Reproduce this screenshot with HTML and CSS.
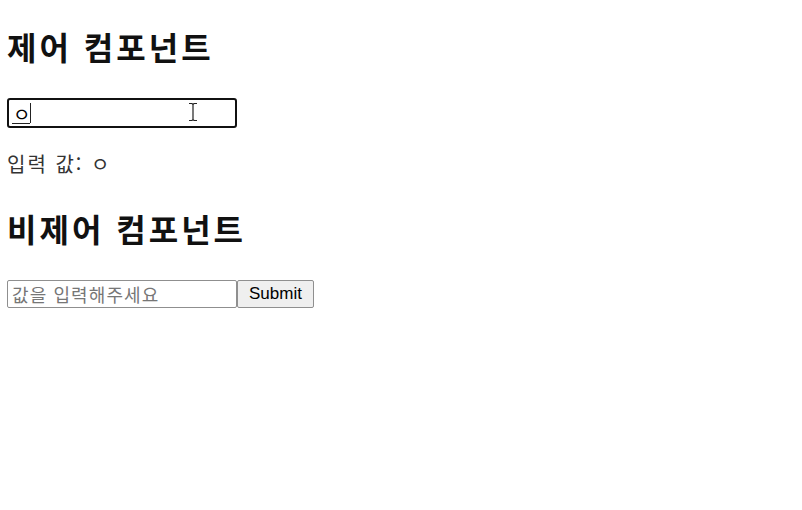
FILE: index.html
```html
<!DOCTYPE html>
<html lang="ko">
<head>
<meta charset="utf-8">
<title>컴포넌트</title>
<link rel="stylesheet" href="styles.css">
</head>
<body>
  <h2 class="title first">제어 컴포넌트</h2>
  <div class="field">
    <input class="text-input focused" type="text" value="ㅇ">
    <span class="compose-line"></span>
    <span class="caret"></span>
    <svg class="ibeam" width="10" height="20" viewBox="0 0 10 20" aria-hidden="true">
      <path d="M1 1.5h3l1 1 1-1h3M5 2.5v15M1 18.5h3l1-1 1 1h3" fill="none" stroke="#222" stroke-width="1.2"/>
    </svg>
  </div>
  <p class="value">입력 값: ㅇ</p>
  <h2 class="title second">비제어 컴포넌트</h2>
  <form class="form-row">
    <input class="text-input plain" type="text" placeholder="값을 입력해주세요">
    <button class="submit" type="button">Submit</button>
  </form>
</body>
</html>
```
FILE: styles.css
```css
html, body {
  margin: 0;
  padding: 0;
  background: #fff;
}
body {
  padding: 0 7px;
  font-family: "Noto Sans CJK KR", "Noto Sans", sans-serif;
  color: #000;
}
.title {
  margin: 0;
  font-size: 32px;
  line-height: 40px;
  font-weight: 700;
  letter-spacing: 3px;
  color: #111;
}
.first {
  margin-top: 26px;
}
.second {
  margin-top: 30px;
}
.field {
  position: relative;
  margin-top: 32px;
  width: 230px;
  height: 30px;
}
.text-input {
  box-sizing: border-box;
  display: block;
  width: 230px;
  margin: 0;
  font-family: "Noto Sans CJK KR", "Noto Sans", sans-serif;
  font-size: 18px;
  color: #000;
  background: #fff;
  outline: none;
}
.focused {
  height: 30px;
  border: 2px solid #111;
  border-radius: 3px;
  padding: 0 4px;
  font-size: 19px;
}
.compose-line {
  position: absolute;
  left: 5px;
  top: 25px;
  width: 18px;
  height: 1px;
  background: #222;
}
.caret {
  position: absolute;
  left: 23px;
  top: 5px;
  width: 1px;
  height: 20px;
  background: #222;
}
.ibeam {
  position: absolute;
  left: 181px;
  top: 4px;
}
.value {
  margin: 22px 0 0;
  font-size: 20px;
  line-height: 28px;
  letter-spacing: 2px;
  color: #333;
}
.form-row {
  display: flex;
  margin-top: 32px;
}
.plain {
  height: 28px;
  border: 1px solid #8f8f8f;
  border-radius: 2px;
  padding: 0 4px;
  letter-spacing: 1.1px;
}
.plain::placeholder {
  color: #767676;
}
.submit {
  box-sizing: border-box;
  height: 28px;
  width: 77px;
  margin: 0;
  padding: 0;
  font-family: "Liberation Sans", Arial, sans-serif;
  font-size: 17px;
  color: #000;
  background: #efefef;
  border: 1px solid #8f8f8f;
  border-radius: 2px;
}
```
